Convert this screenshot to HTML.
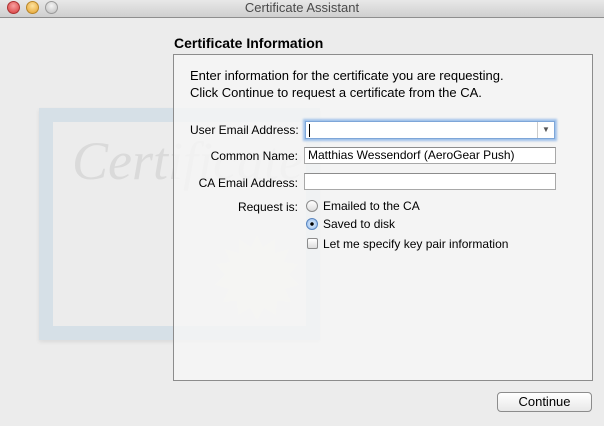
<!DOCTYPE html>
<html><head><style>
body{margin:0;width:604px;height:426px;background:#ececec;font-family:"Liberation Sans",sans-serif;position:relative;overflow:hidden;font-size:12px;color:#000}
.tb{position:absolute;left:0;top:0;width:604px;height:17px;background:linear-gradient(#e8e8e8,#cfcfcf);border-bottom:1px solid #8e8e8e;text-align:center;font-size:13px;line-height:16px;color:#4a4a4a}
.dot{position:absolute;top:1px;width:13px;height:13px;border-radius:50%}
.a{position:absolute;white-space:nowrap}
.inp{position:absolute;background:#fff;border:1px solid #a8a8a8;border-top-color:#8c8c8c;height:17px;box-sizing:border-box;font-size:12px;line-height:15px;padding-left:3px}
.rad{position:absolute;width:12px;height:12px;border-radius:50%;border:1px solid #8c8c8c;background:linear-gradient(#fff,#ddd);box-sizing:border-box}
</style></head><body>
<div class="tb">Certificate Assistant
<div class="dot" style="left:7px;background:radial-gradient(circle at 50% 35%,#f8a0a0,#d63a3a);border:1px solid #a33;box-sizing:border-box"></div>
<div class="dot" style="left:26px;background:radial-gradient(circle at 50% 35%,#fde3a0,#e4a02a);border:1px solid #b8862a;box-sizing:border-box"></div>
<div class="dot" style="left:45px;background:radial-gradient(circle at 50% 35%,#f4f4f4,#bdbdbd);border:1px solid #9a9a9a;box-sizing:border-box"></div>
</div>
<div class="a" style="left:39px;top:108px;width:281px;height:232px;background:#d6e0e7;box-shadow:0 2px 4px rgba(0,0,0,.08)"></div>
<div class="a" style="left:53px;top:122px;width:253px;height:204px;background:#ececec"></div>
<div class="a" style="left:72px;top:130px;font-family:'Liberation Serif',serif;font-style:italic;font-size:54px;color:#dadada">Certificate</div>
<svg class="a" style="left:215px;top:235px" width="85" height="85" viewBox="0 0 85 85"><polygon fill="#f0eee4" points="42,0 48,12 60,4 60,18 74,14 69,27 83,29 74,40 84,50 70,54 76,67 62,66 61,80 49,73 42,85 35,73 23,80 22,66 8,67 14,54 0,50 10,40 1,29 15,27 10,14 24,18 24,4 36,12"/></svg>
<div class="a" style="left:174px;top:35px;font-size:14px;font-weight:bold">Certificate Information</div>
<div class="a" style="left:173px;top:54px;width:418px;height:325px;border:1px solid #8c8c8c;background:rgba(246,246,246,.8)"></div>
<div class="a" style="left:190px;top:67px;font-size:13px;line-height:17px">Enter information for the certificate you are requesting.<br>Click Continue to request a certificate from the CA.</div>
<div class="a" style="left:190px;top:123px;width:108px;text-align:right">User Email Address:</div>
<div class="a" style="left:190px;top:149px;width:108px;text-align:right">Common Name:</div>
<div class="a" style="left:190px;top:176px;width:108px;text-align:right">CA Email Address:</div>
<div class="a" style="left:190px;top:200px;width:108px;text-align:right">Request is:</div>
<div class="inp" style="left:305px;top:121px;width:250px;height:18px;border-color:#7ea6d8;box-shadow:0 0 2px 2px #9ec0ea"><span style="display:inline-block;width:1px;height:13px;background:#000;margin-top:2px"></span><div style="position:absolute;right:0;top:0;width:16px;height:16px;border-left:1px solid #ccc;font-size:8px;text-align:center;line-height:16px;color:#555">▼</div></div>
<div class="inp" style="left:304px;top:147px;width:252px">Matthias Wessendorf (AeroGear Push)</div>
<div class="inp" style="left:304px;top:173px;width:252px"></div>
<div class="rad" style="left:306px;top:200px"></div>
<div class="a" style="left:323px;top:199px">Emailed to the CA</div>
<div class="rad" style="left:306px;top:218px;border-color:#5a86c0;background:radial-gradient(circle,#000 1.5px,#cfe2f8 2px,#8ab4e8)"></div>
<div class="a" style="left:323px;top:217px">Saved to disk</div>
<div class="a" style="left:307px;top:238px;width:11px;height:11px;border:1px solid #8c8c8c;border-radius:2px;background:linear-gradient(#fff,#ddd);box-sizing:border-box"></div>
<div class="a" style="left:323px;top:237px">Let me specify key pair information</div>
<div class="a" style="left:497px;top:392px;width:95px;height:20px;box-sizing:border-box;border:1px solid #8c8c8c;border-radius:4px;background:linear-gradient(#fff,#e8e8e8);text-align:center;font-size:13px;line-height:18px">Continue</div>
</body></html>
